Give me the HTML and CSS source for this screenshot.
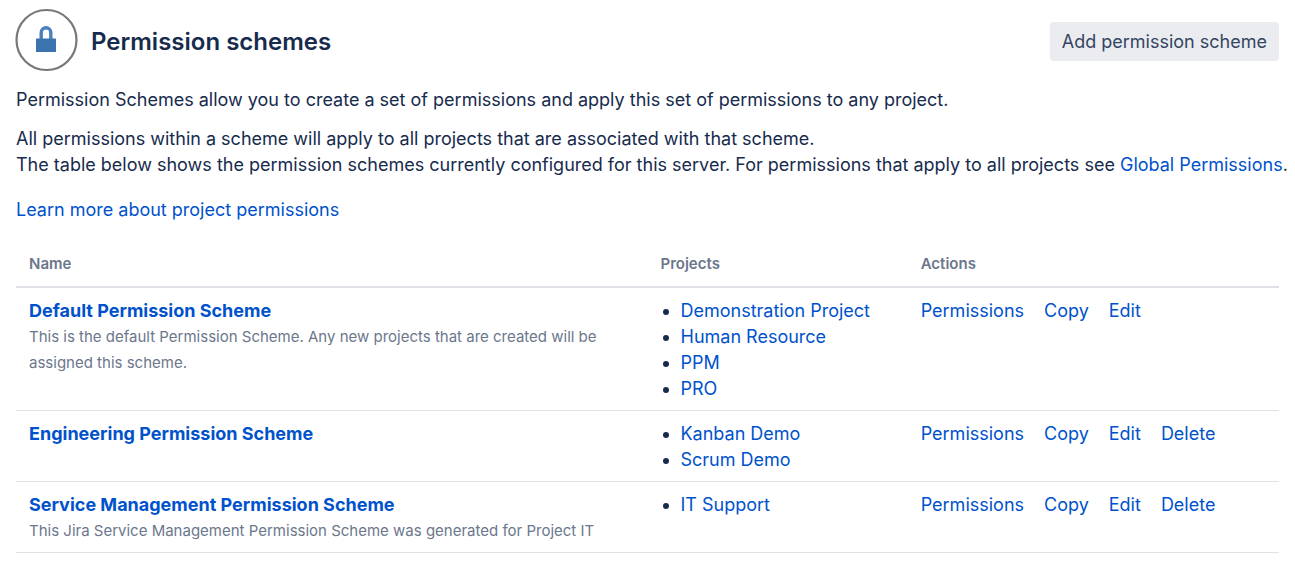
FILE: index.html
```html
<!DOCTYPE html>
<html lang="en">
<head>
<meta charset="utf-8">
<title>Permission schemes</title>
<link rel="stylesheet" href="styles.css">
</head>
<body>
<main class="page">
<header class="header">
<svg class="avatar" viewBox="0 0 64 64" aria-hidden="true"><circle cx="31.500" cy="32" r="30" fill="#fff" stroke="#777" stroke-width="2.200"/><path d="M26.200 31v-6.500a4.800 4.800 0 0 1 9.600 0V31" fill="none" stroke="#4a80bd" stroke-width="3.400"/><rect x="21" y="30.500" width="20" height="13.500" rx=".5" fill="#3b73af"/></svg>
<h1 class="title">Permission schemes</h1>
<button class="add" type="button">Add permission scheme</button>
</header>
<p class="intro">Permission Schemes allow you to create a set of permissions and apply this set of permissions to any project.</p>
<p class="details">All permissions within a scheme will apply to all projects that are associated with that scheme.<br>The table below shows the permission schemes currently configured for this server. For permissions that apply to all projects see <a href="#">Global Permissions</a>.</p>
<p class="learn"><a href="#">Learn more about project permissions</a></p>
<table class="schemes">
<colgroup><col class="col-name"><col class="col-projects"><col></colgroup>
<thead><tr><th scope="col">Name</th><th scope="col">Projects</th><th scope="col">Actions</th></tr></thead>
<tbody>
<tr><td><a class="name" href="#">Default Permission Scheme</a><div class="description">This is the default Permission Scheme. Any new projects that are created will be assigned this scheme.</div></td>
<td><ul class="projects"><li><a href="#">Demonstration Project</a></li><li><a href="#">Human Resource</a></li><li><a href="#">PPM</a></li><li><a href="#">PRO</a></li></ul></td>
<td><div class="actions"><a href="#">Permissions</a><a href="#">Copy</a><a href="#">Edit</a></div></td></tr>
<tr><td><a class="name" href="#">Engineering Permission Scheme</a></td>
<td><ul class="projects"><li><a href="#">Kanban Demo</a></li><li><a href="#">Scrum Demo</a></li></ul></td>
<td><div class="actions"><a href="#">Permissions</a><a href="#">Copy</a><a href="#">Edit</a><a href="#">Delete</a></div></td></tr>
<tr><td><a class="name" href="#">Service Management Permission Scheme</a><div class="description">This Jira Service Management Permission Scheme was generated for Project IT</div></td>
<td><ul class="projects"><li><a href="#">IT Support</a></li></ul></td>
<td><div class="actions"><a href="#">Permissions</a><a href="#">Copy</a><a href="#">Edit</a><a href="#">Delete</a></div></td></tr>
</tbody>
</table>
</main>
</body>
</html>
```
FILE: styles.css
```css
* { box-sizing: border-box; }
body { margin: 0; background: #fff; color: #172b4d; font-family: Inter, "Liberation Sans", sans-serif; font-size: 18px; line-height: 26px; }
a { color: #0052cc; text-decoration: none; }
a:hover { text-decoration: underline; }
p { margin: 0; }
.page { padding: 8px 16px; }
.header { display: flex; align-items: center; gap: 12px; }
.avatar { width: 64px; height: 64px; flex: none; margin-left: -1px; }
.title { margin: 0; padding-top: 4px; flex: 1; font-size: 24px; line-height: 32px; font-weight: 600; }
.add { margin-top: 3px; border: 0; border-radius: 4px; padding: 7px 12px 6px; background: #ebecf0; color: #344563; font: inherit; }
.intro { margin-top: 15px; }
.details { margin-top: 13px; }
.learn { margin-top: 19px; }
.schemes { width: 100%; margin-top: 21px; border-collapse: collapse; table-layout: fixed; }
.col-name { width: 50%; }
.col-projects { width: 20.6%; }
th { padding: 8px 13px 10px; text-align: left; font-size: 15px; font-weight: 600; line-height: 24px; color: #6b778c; border-bottom: 2px solid #dfe1e6; }
td { padding: 10px 13px 8px; vertical-align: top; border-bottom: 1px solid #dfe1e6; }
.name { font-weight: 700; }
.description { font-size: 15px; color: #6b778c; }
.projects { margin: 0; padding-left: 20px; }
.actions { display: flex; flex-wrap: wrap; column-gap: 20px; }

/* Keep each sentence group on one line when the window has room for it. */
@media (min-width: 1290px) {
  .details { white-space: nowrap; }
}
```
